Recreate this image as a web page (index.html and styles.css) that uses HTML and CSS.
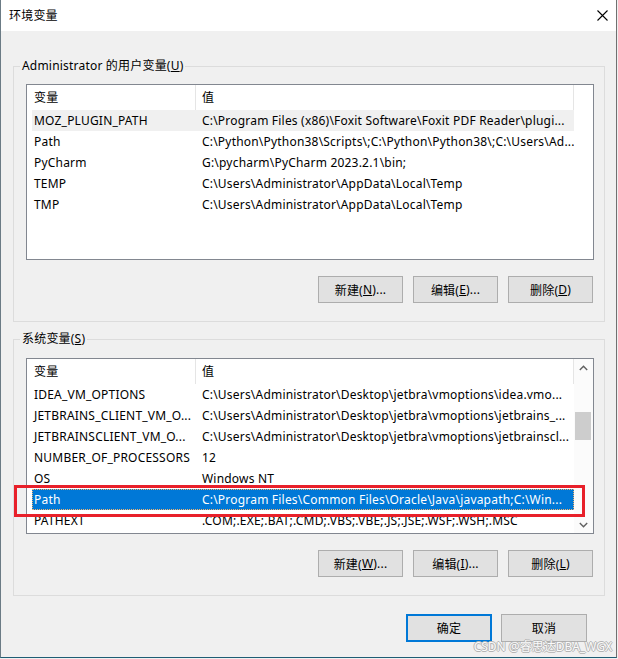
FILE: index.html
```html
<!DOCTYPE html>
<html lang="zh-CN">
<head>
<meta charset="utf-8">
<title>环境变量</title>
<link rel="stylesheet" href="styles.css">
</head>
<body>
<div class="window">
  <header class="titlebar">
    <span class="title">环境变量</span>
    <svg class="close" width="11" height="11" viewBox="0 0 11 11"><path d="M0.5 0.5L10.5 10.5M10.5 0.5L0.5 10.5" stroke="#000" stroke-width="1.1" fill="none"/></svg>
  </header>
  <main class="content">
    <section class="group g-user">
      <div class="group-label">Administrator 的用户变量(<u>U</u>)</div>
      <div class="list">
        <div class="list-main">
          <div class="list-head"><div class="hname">变量</div><div class="hval">值</div></div>
          <div class="rows">
            <div class="row inactive"><span class="c-name">MOZ_PLUGIN_PATH</span><span class="c-val">C:\Program Files (x86)\Foxit Software\Foxit PDF Reader\plugi...</span></div>
            <div class="row"><span class="c-name">Path</span><span class="c-val">C:\Python\Python38\Scripts\;C:\Python\Python38\;C:\Users\Ad...</span></div>
            <div class="row"><span class="c-name">PyCharm</span><span class="c-val">G:\pycharm\PyCharm 2023.2.1\bin;</span></div>
            <div class="row"><span class="c-name">TEMP</span><span class="c-val">C:\Users\Administrator\AppData\Local\Temp</span></div>
            <div class="row"><span class="c-name">TMP</span><span class="c-val">C:\Users\Administrator\AppData\Local\Temp</span></div>
          </div>
        </div>
        <div class="list-side"></div>
      </div>
      <div class="btnrow">
        <button class="btn">新建(<u>N</u>)...</button>
        <button class="btn">编辑(<u>E</u>)...</button>
        <button class="btn">删除(<u>D</u>)</button>
      </div>
    </section>

    <section class="group g-sys">
      <div class="group-label">系统变量(<u>S</u>)</div>
      <div class="list">
        <div class="list-main">
          <div class="list-head"><div class="hname">变量</div><div class="hval">值</div></div>
          <div class="rows">
            <div class="row"><span class="c-name">IDEA_VM_OPTIONS</span><span class="c-val">C:\Users\Administrator\Desktop\jetbra\vmoptions\idea.vmo...</span></div>
            <div class="row"><span class="c-name">JETBRAINS_CLIENT_VM_O...</span><span class="c-val">C:\Users\Administrator\Desktop\jetbra\vmoptions\jetbrains_...</span></div>
            <div class="row"><span class="c-name">JETBRAINSCLIENT_VM_O...</span><span class="c-val">C:\Users\Administrator\Desktop\jetbra\vmoptions\jetbrainscl...</span></div>
            <div class="row"><span class="c-name">NUMBER_OF_PROCESSORS</span><span class="c-val">12</span></div>
            <div class="row"><span class="c-name">OS</span><span class="c-val">Windows NT</span></div>
            <div class="row active"><span class="c-name">Path</span><span class="c-val">C:\Program Files\Common Files\Oracle\Java\javapath;C:\Win...</span></div>
            <div class="row"><span class="c-name">PATHEXT</span><span class="c-val">.COM;.EXE;.BAT;.CMD;.VBS;.VBE;.JS;.JSE;.WSF;.WSH;.MSC</span></div>
          </div>
          <div class="mark"></div>
        </div>
        <div class="list-side scrollbar">
          <div class="arrow"><svg width="9" height="6" viewBox="0 0 9 6"><path d="M0.8 5L4.5 1.3L8.2 5" stroke="#606060" stroke-width="1.4" fill="none"/></svg></div>
          <div class="track"><div class="thumb"></div></div>
          <div class="arrow"><svg width="9" height="6" viewBox="0 0 9 6"><path d="M0.8 1L4.5 4.7L8.2 1" stroke="#606060" stroke-width="1.4" fill="none"/></svg></div>
        </div>
      </div>
      <div class="btnrow">
        <button class="btn">新建(<u>W</u>)...</button>
        <button class="btn">编辑(<u>I</u>)...</button>
        <button class="btn">删除(<u>L</u>)</button>
      </div>
    </section>

    <div class="footer">
      <button class="btn btn-big btn-ok">确定</button>
      <button class="btn btn-big">取消</button>
    </div>
  </main>
  <div class="watermark">CSDN @睿思达DBA_WGX</div>
</div>
</body>
</html>
```

FILE: styles.css
```css
* { box-sizing: border-box; }
html, body { margin: 0; padding: 0; }
body {
  width: 618px;
  height: 659px;
  overflow: hidden;
  background: #f0f0f0;
  font-family: "Noto Sans", "Noto Sans CJK SC", sans-serif;
  font-size: 12px;
  letter-spacing: 0.2px;
  color: #000;
}
.window {
  position: relative;
  width: 617px;
  height: 658px;
  background: #f0f0f0;
  border-left: 1px solid #6b7b85;
  border-right: 1px solid #707070;
  border-bottom: 1px solid #1f5c74;
  display: flex;
  flex-direction: column;
}
.titlebar {
  height: 31px;
  flex: none;
  background: #fff;
  display: flex;
  align-items: center;
  justify-content: space-between;
  padding: 0 8px 0 8px;
}
.title { line-height: 16px; }
.close { display: block; }

.content {
  flex: 1;
  padding-left: 12px;
}
.group {
  width: 592px;
  border: 1px solid #dcdcdc;
  padding: 0 11px 18px 12px;
}
.g-user { margin-top: 35px; }
.g-sys { margin-top: 17px; }
.group-label {
  width: fit-content;
  height: 16px;
  line-height: 16px;
  margin: -9px 0 0 -6px;
  padding: 0 2px;
  background: #f0f0f0;
  white-space: nowrap;
}
.list {
  display: flex;
  width: 568px;
  height: 176px;
  margin-top: 10px;
  border: 1px solid #828790;
  background: #fff;
}
.g-sys .list { margin-top: 11px; position: relative; }
.list-main {
  position: relative;
  width: 547px;
  overflow: hidden;
}
.list-main:has(.mark) { overflow: visible; }
.list-side { flex: 1; background: #fff; }

.list-head {
  display: flex;
  height: 25px;
  line-height: 25px;
}
.hname {
  width: 169px;
  padding-left: 7px;
  border-right: 1px solid #e5e5e5;
}
.hval {
  flex: 1;
  padding-left: 6px;
  border-right: 1px solid #e5e5e5;
}
.rows { margin-left: 5px; overflow: hidden; }
.row {
  display: flex;
  height: 21px;
  line-height: 21px;
  white-space: nowrap;
}
.c-name {
  width: 164px;
  flex: none;
  padding-left: 2px;
  overflow: hidden;
}
.c-val {
  flex: 1;
  min-width: 0;
  padding-left: 6px;
  overflow: hidden;
}
.row.inactive { background: #f0f0f0; }
.row.active {
  background: #0078d7;
  color: #fff;
  outline: 1px dotted #f2b36e;
  outline-offset: -1px;
}
.mark {
  position: absolute;
  left: -13px;
  top: 126px;
  width: 571px;
  height: 32px;
  border: 3px solid #e8202a;
}

.scrollbar {
  display: flex;
  flex-direction: column;
  background: #fbfbfb;
}
.arrow {
  height: 17px;
  display: flex;
  align-items: center;
  justify-content: center;
}
.arrow svg { display: block; }
.track { flex: 1; }
.thumb {
  margin: 36px 0 0 1px;
  width: 16px;
  height: 28px;
  background: #cdcdcd;
}

.btnrow {
  display: flex;
  justify-content: flex-end;
  gap: 10px;
  margin-top: 16px;
}
.btn {
  width: 85px;
  height: 27px;
  border: 1px solid #adadad;
  background: #e1e1e1;
  font: inherit;
  letter-spacing: inherit;
  color: #000;
  padding: 0;
  display: flex;
  align-items: center;
  justify-content: center;
}
.footer {
  display: flex;
  justify-content: flex-end;
  gap: 9px;
  margin-top: 18px;
  padding-right: 29px;
}
.btn-big { width: 86px; height: 28px; }
.btn-ok { border: 2px solid #0078d7; }

.watermark {
  position: absolute;
  right: 4px;
  bottom: 3px;
  font-size: 12px;
  line-height: 14px;
  letter-spacing: 0;
  color: #fafafa;
  text-shadow: 1px 0 0 #b4b4b4, -1px 0 0 #b4b4b4, 0 1px 0 #b4b4b4, 0 -1px 0 #b4b4b4;
  white-space: nowrap;
}
```
